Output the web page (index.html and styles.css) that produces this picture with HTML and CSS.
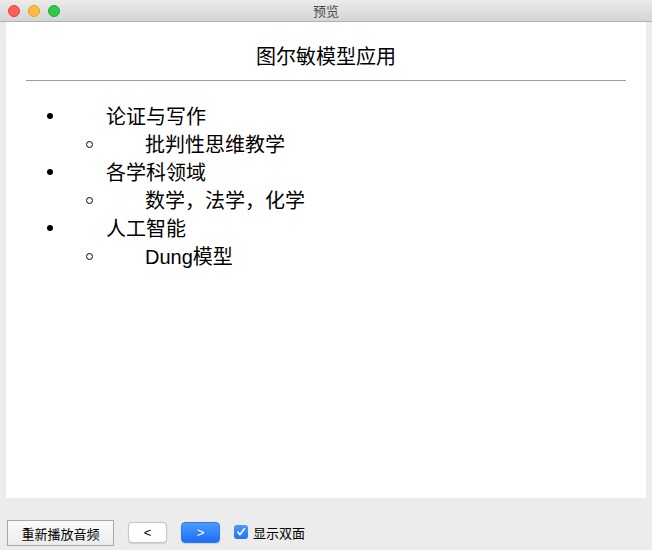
FILE: index.html
```html
<!DOCTYPE html>
<html lang="zh">
<head>
<meta charset="utf-8">
<title>预览</title>
<link rel="stylesheet" href="styles.css">
</head>
<body>
<div class="window">
  <div class="titlebar">
    <div class="lights">
      <span class="light red"></span>
      <span class="light yellow"></span>
      <span class="light green"></span>
    </div>
    <div class="wtitle">预览</div>
  </div>
  <div class="content">
    <h1 class="heading">图尔敏模型应用</h1>
    <div class="rule"></div>
    <ul class="list">
      <li class="item">论证与写作</li>
      <li class="sub">批判性思维教学</li>
      <li class="item">各学科领域</li>
      <li class="sub">数学，法学，化学</li>
      <li class="item">人工智能</li>
      <li class="sub">Dung模型</li>
    </ul>
  </div>
  <div class="bottombar">
    <button class="btn replay">重新播放音频</button>
    <button class="btn nav">&lt;</button>
    <button class="btn nav primary">&gt;</button>
    <label class="check">
      <span class="box"><svg width="10" height="10" viewBox="0 0 10 10"><path d="M1.8 5.2 L4 7.6 L8.4 1.8" fill="none" stroke="#fff" stroke-width="1.6" stroke-linecap="round" stroke-linejoin="round"/></svg></span>
      <span class="check-label">显示双面</span>
    </label>
  </div>
</div>
</body>
</html>
```
FILE: styles.css
```css
html, body {
  margin: 0;
  padding: 0;
}
body {
  width: 652px;
  height: 550px;
  background: #ececec;
  font-family: "Liberation Sans", "Noto Sans CJK SC", sans-serif;
  overflow: hidden;
}
.window {
  display: flex;
  flex-direction: column;
  height: 550px;
}
.titlebar {
  position: relative;
  height: 21px;
  border-bottom: 1px solid #b1b1b1;
  background: linear-gradient(#ebebeb, #d5d5d5);
  display: flex;
  align-items: center;
  justify-content: center;
}
.lights {
  position: absolute;
  left: 8px;
  top: 5px;
  display: flex;
  gap: 8px;
}
.light {
  width: 12px;
  height: 12px;
  border-radius: 50%;
  box-sizing: border-box;
}
.red { background: #fc605c; border: 1px solid #e0443e; }
.yellow { background: #fdbc40; border: 1px solid #dea123; }
.green { background: #34c84a; border: 1px solid #27aa35; }
.wtitle {
  font-family: "Noto Sans CJK SC", sans-serif;
  font-size: 13px;
  color: #4a4a4a;
  line-height: 21px;
}
.content {
  margin: 0 6px;
  height: 476px;
  background: #fff;
  padding-top: 20px;
  box-sizing: border-box;
}
.heading {
  margin: 0;
  text-align: center;
  font-family: "Noto Sans CJK SC", sans-serif;
  font-weight: normal;
  font-size: 20px;
  line-height: 28px;
  color: #000;
}
.rule {
  margin: 10px 20px 0;
  border-top: 1px solid #9c9c9c;
  height: 0;
}
.list {
  list-style: none;
  margin: 20px 0 0;
  padding: 0 0 0 41px;
  font-family: "Liberation Sans", "Noto Sans CJK SC", sans-serif;
  font-size: 20px;
  color: #000;
}
.item, .sub {
  display: flex;
  align-items: center;
  height: 28px;
}
.item::before {
  content: "";
  flex: none;
  width: 6px;
  height: 6px;
  border-radius: 50%;
  background: #000;
  margin-right: 53px;
  position: relative;
  top: 1px;
}
.sub {
  padding-left: 39px;
}
.sub::before {
  content: "";
  flex: none;
  width: 7px;
  height: 7px;
  border-radius: 50%;
  border: 1px solid #000;
  box-sizing: border-box;
  margin-right: 52px;
  position: relative;
  top: 1px;
}
.bottombar {
  display: flex;
  align-items: center;
  padding: 20px 0 0 7px;
  gap: 14px;
}
.btn {
  font-family: "Noto Sans CJK SC", sans-serif;
  font-size: 13px;
  color: #000;
  margin: 0;
  padding: 0;
}
.replay {
  width: 107px;
  height: 26px;
  background: linear-gradient(#fbfbfb, #ececec);
  border: 1px solid #a9a9a9;
  border-radius: 0;
  margin-top: 2px;
}
.nav {
  width: 39px;
  height: 21px;
  background: #fff;
  border: 1px solid #c6c6c6;
  border-radius: 4px;
  box-shadow: 0 0.5px 1px rgba(0,0,0,0.12);
  font-family: "Liberation Sans", sans-serif;
  font-size: 13px;
  line-height: 19px;
}
.nav.primary {
  background: linear-gradient(#4d9bfd, #1b6ef6);
  border-color: #2a78f2;
  color: #fff;
}
.check {
  display: flex;
  align-items: center;
  gap: 5px;
}
.box {
  width: 14px;
  height: 14px;
  border-radius: 3px;
  background: linear-gradient(#4a9afc, #2272f5);
  display: flex;
  align-items: center;
  justify-content: center;
}
.check-label {
  font-family: "Noto Sans CJK SC", sans-serif;
  font-size: 13px;
  color: #000;
}
```
